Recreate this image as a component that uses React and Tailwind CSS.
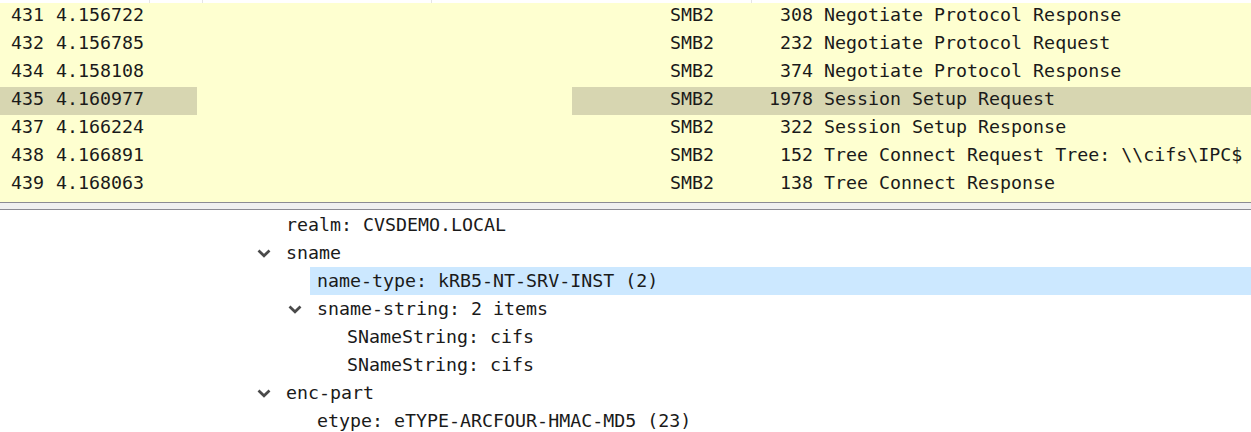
import React from "react";

const packets = [
  { no: "431", time: "4.156722", proto: "SMB2", len: "308", info: "Negotiate Protocol Response" },
  { no: "432", time: "4.156785", proto: "SMB2", len: "232", info: "Negotiate Protocol Request" },
  { no: "434", time: "4.158108", proto: "SMB2", len: "374", info: "Negotiate Protocol Response" },
  { no: "435", time: "4.160977", proto: "SMB2", len: "1978", info: "Session Setup Request", selected: true },
  { no: "437", time: "4.166224", proto: "SMB2", len: "322", info: "Session Setup Response" },
  { no: "438", time: "4.166891", proto: "SMB2", len: "152", info: "Tree Connect Request Tree: \\\\cifs\\IPC$" },
  { no: "439", time: "4.168063", proto: "SMB2", len: "138", info: "Tree Connect Response" },
];

const tree = [
  { level: 0, text: "realm: CVSDEMO.LOCAL" },
  { level: 0, text: "sname", open: true },
  { level: 1, text: "name-type: kRB5-NT-SRV-INST (2)", selected: true },
  { level: 1, text: "sname-string: 2 items", open: true },
  { level: 2, text: "SNameString: cifs" },
  { level: 2, text: "SNameString: cifs" },
  { level: 0, text: "enc-part", open: true },
  { level: 1, text: "etype: eTYPE-ARCFOUR-HMAC-MD5 (23)" },
];

const indents = ["w-[256px]", "w-[287px]", "w-[317px]"];

function Chevron() {
  return (
    <svg width="14" height="9" viewBox="0 0 14 9" className="ml-px">
      <path d="M1.5 1.5 L7 6.8 L12.5 1.5" fill="none" stroke="#4a4a4a" strokeWidth="2.7" />
    </svg>
  );
}

export default function App() {
  return (
    <div
      className="w-[1251px] h-[432px] overflow-hidden bg-white text-[#1a1a1a] text-[18.3px] leading-[28px]"
      style={{ fontFamily: '"DejaVu Sans Mono", "Liberation Mono", monospace' }}
    >
      {/* header remnant */}
      <div className="h-[3px] flex bg-white">
        <div className="w-[150px] border-r border-[#e5e5e5]" />
        <div className="w-[53px] border-r border-[#e5e5e5]" />
        <div className="w-[229px] border-r border-[#e5e5e5]" />
        <div className="w-[320px] border-r border-[#e5e5e5]" />
      </div>

      {/* packet list */}
      <div className="bg-[#feffd0] h-[199px]">
        {packets.map((p) => {
          const sel = p.selected ? "bg-[#d7d6b1]" : "";
          return (
            <div key={p.no} className="flex h-[28px] leading-[24px] whitespace-pre">
              <div className={`w-[50px] pl-[11px] ${sel}`}>{p.no}</div>
              <div className={`w-[147px] pl-[6px] ${sel}`}>{p.time}</div>
              <div className="w-[375px]" />
              <div className={`w-[180px] pl-[98px] ${sel}`}>{p.proto}</div>
              <div className={`w-[61px] text-right ${sel}`}>{p.len}</div>
              <div className={`flex-1 pl-[11px] ${sel}`}>{p.info}</div>
            </div>
          );
        })}
      </div>

      {/* splitter */}
      <div className="h-[8px] bg-[#f0f0f0] border-y border-[#8b8b93]" />

      {/* details tree */}
      <div className="pt-px">
        {tree.map((n, i) => (
          <div key={i} className="flex h-[28px] whitespace-pre">
            <div className={`${indents[n.level]} shrink-0`} />
            <div className="w-[23px] shrink-0 flex items-center">{n.open && <Chevron />}</div>
            <div className={`flex-1 pl-[7px] ${n.selected ? "bg-[#cce8ff]" : ""}`}>{n.text}</div>
          </div>
        ))}
      </div>
    </div>
  );
}
